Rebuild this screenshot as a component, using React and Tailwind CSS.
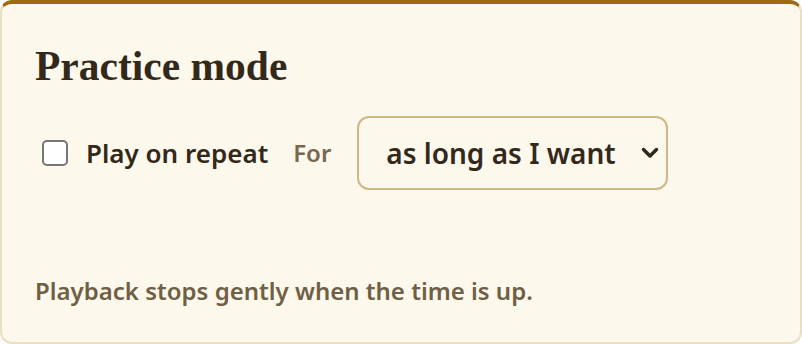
import React, { useState } from 'react';

const options = ['as long as I want', '5 minutes', '10 minutes', '15 minutes', '30 minutes'];

const App = () => {
  const [repeat, setRepeat] = useState(false);
  const [duration, setDuration] = useState(options[0]);

  return (
    <div className="w-[802px] h-[344px] bg-white">
      <section className="h-full flex flex-col bg-[#fdf8ec] border-2 border-t-4 border-[#e8dfc4] border-t-[#9c6b12] rounded-xl px-[33px] pt-[38px] pb-[36px] font-['Noto_Sans',sans-serif]">
        <h2 className="font-['Liberation_Serif',serif] font-bold text-[41.5px] leading-[48px] text-[#33291b]">
          Practice mode
        </h2>

        <div className="flex items-center mt-[26px]">
          <label className="flex items-center gap-[18px] pl-[7px] cursor-pointer">
            <input
              type="checkbox"
              checked={repeat}
              onChange={(e) => setRepeat(e.target.checked)}
              className="appearance-none w-[26px] h-[26px] rounded-[5px] border-2 border-[#767676] bg-white"
            />
            <span className="text-[26px] font-semibold text-[#33291b]">Play on repeat</span>
          </label>
          <span className="ml-[25px] text-[24px] font-semibold text-[#776850]">For</span>
          <div className="relative ml-[26px]">
            <select
              value={duration}
              onChange={(e) => setDuration(e.target.value)}
              className="appearance-none w-[311px] h-[74px] rounded-xl border-2 border-[#cdb886] bg-[#fdf8ec] pl-[27px] pr-[40px] text-[28px] font-semibold text-[#33291b]"
            >
              {options.map((o) => (
                <option key={o} value={o}>{o}</option>
              ))}
            </select>
            <svg className="absolute right-[9px] top-1/2 -translate-y-1/2 pointer-events-none" width="18" height="12" viewBox="0 0 18 12">
              <path d="M2.5 2.5 L9 9 L15.5 2.5" fill="none" stroke="#33291b" strokeWidth="3.5" strokeLinecap="round" strokeLinejoin="round" />
            </svg>
          </div>
        </div>

        <p className="mt-auto text-[24px] leading-[30px] font-semibold text-[#6f5f45]">
          Playback stops gently when the time is up.
        </p>
      </section>
    </div>
  );
};

export default App;
